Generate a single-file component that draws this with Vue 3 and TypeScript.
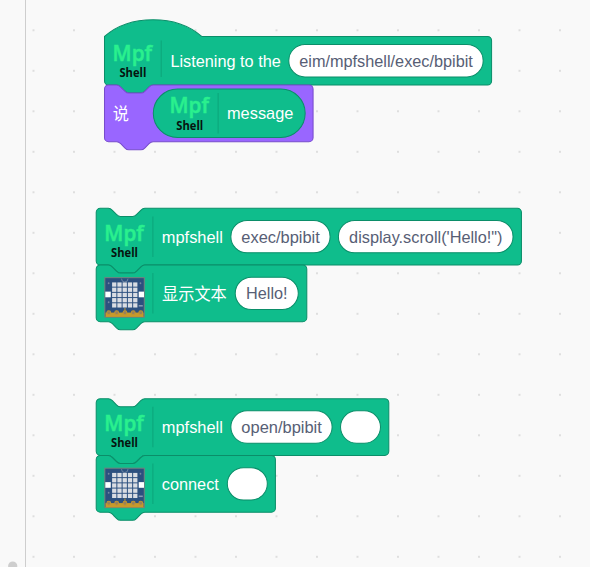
<script setup lang="ts">
type Kind = 'hat' | 'stack' | 'reporter'
type Icon = 'mpf' | 'board'

interface Label { text: string; x: number; y: number; width: number }
interface Input { text: string; x: number; y: number; width: number; textWidth: number }
interface Block {
  id: string
  kind: Kind
  tone: 'green' | 'purple'
  x: number
  y: number
  width: number
  height: number
  icon?: { name: Icon; x: number; y: number }
  divider?: { x: number; y1: number; y2: number }
  labels: Label[]
  inputs: Input[]
}

const scale = 1.0125

const blocks: Block[] = [
  {
    id: 'listen', kind: 'hat', tone: 'green', x: 104.5, y: 36.4, width: 382.3, height: 48,
    icon: { name: 'mpf', x: 8, y: 4 }, divider: { x: 56, y1: 4, y2: 40 },
    labels: [{ text: 'Listening to the', x: 65.1, y: 30.2, width: 109 }],
    inputs: [{ text: 'eim/mpfshell/exec/bpibit', x: 182, y: 8, width: 192, textWidth: 171.5 }],
  },
  {
    id: 'say', kind: 'stack', tone: 'purple', x: 104.5, y: 85, width: 206, height: 56,
    labels: [{ text: '说', x: 8.2, y: 34.4, width: 16 }],
    inputs: [],
  },
  {
    id: 'message', kind: 'reporter', tone: 'green', x: 153.3, y: 89, width: 150, height: 48,
    icon: { name: 'mpf', x: 16, y: 4 }, divider: { x: 64, y1: 4, y2: 44 },
    labels: [{ text: 'message', x: 72.8, y: 29.7, width: 65.5 }],
    inputs: [],
  },
  {
    id: 'exec', kind: 'stack', tone: 'green', x: 96.2, y: 208.3, width: 420, height: 56,
    icon: { name: 'mpf', x: 8, y: 12 }, divider: { x: 56, y1: 8, y2: 48 },
    labels: [{ text: 'mpfshell', x: 64.8, y: 33.9, width: 60.3 }],
    inputs: [
      { text: 'exec/bpibit', x: 133, y: 12, width: 98, textWidth: 77.5 },
      { text: "display.scroll('Hello!\")", x: 239.2, y: 12, width: 172.5, textWidth: 151.5 },
    ],
  },
  {
    id: 'show', kind: 'stack', tone: 'green', x: 96.2, y: 265, width: 208, height: 56,
    icon: { name: 'board', x: 8, y: 12 }, divider: { x: 56, y1: 8, y2: 48 },
    labels: [{ text: '显示文本', x: 65, y: 34.9, width: 64 }],
    inputs: [{ text: 'Hello!', x: 137.3, y: 12, width: 62.3, textWidth: 41 }],
  },
  {
    id: 'open', kind: 'stack', tone: 'green', x: 96.2, y: 398.7, width: 289, height: 56,
    icon: { name: 'mpf', x: 8, y: 12 }, divider: { x: 56, y1: 8, y2: 48 },
    labels: [{ text: 'mpfshell', x: 64.8, y: 33.9, width: 60.3 }],
    inputs: [
      { text: 'open/bpibit', x: 133, y: 12, width: 100, textWidth: 79.5 },
      { text: '', x: 241.3, y: 12, width: 39.5, textWidth: 0 },
    ],
  },
  {
    id: 'connect', kind: 'stack', tone: 'green', x: 96.2, y: 455.5, width: 177, height: 56,
    icon: { name: 'board', x: 8, y: 12 }, divider: { x: 56, y1: 8, y2: 48 },
    labels: [{ text: 'connect', x: 64.8, y: 33.9, width: 56.3 }],
    inputs: [{ text: '', x: 129.5, y: 12, width: 39.5, textWidth: 0 }],
  },
]

const notch = 'c2 0 3 1 4 2l4 4c1 1 2 2 4 2h12c2 0 3 -1 4 -2l4 -4c1 -1 2 -2 4 -2'
const tab = 'c-2 0 -3 1 -4 2l-4 4c-1 1 -2 2 -4 2h-12c-2 0 -3 -1 -4 -2l-4 -4c-1 -1 -2 -2 -4 -2'

function outline(b: Block): string {
  if (b.kind === 'reporter') {
    const r = b.height / 2
    return `M${r} 0H${b.width - r}a${r} ${r} 0 0 1 0 ${b.height}H${r}a${r} ${r} 0 0 1 0 ${-b.height}z`
  }
  const top = b.kind === 'hat' ? 'M0 0c25 -22 71 -22 96 0' : `M0 4a4 4 0 0 1 4 -4h8${notch}`
  return `${top}H${b.width - 4}a4 4 0 0 1 4 4V${b.height - 4}a4 4 0 0 1 -4 4H48${tab}H4a4 4 0 0 1 -4 -4z`
}

const cells = [0, 1, 2, 3, 4]
const pins = [4.4, 12.2, 20.4, 28.6, 36]
</script>

<template>
  <main class="workspace">
    <svg class="canvas" width="590" height="567" viewBox="0 0 590 567">
      <defs>
        <pattern id="grid" x="32.5" y="29.3" width="40.5" height="40.5" patternUnits="userSpaceOnUse">
          <rect class="dot" width="2" height="2" />
        </pattern>
        <g id="icon-mpf">
          <text class="mpf" x="0" y="20" textLength="39" lengthAdjust="spacingAndGlyphs">Mpf</text>
          <text class="shell" x="6.7" y="36.2" textLength="26.6" lengthAdjust="spacingAndGlyphs">Shell</text>
        </g>
        <g id="icon-board">
          <rect class="pcb" x="0.5" y="0.5" width="39" height="39" />
          <path class="logo" d="M17 1.5q0 3.3 3.2 3.3t3.2-3.3" />
          <circle class="hole" cx="4.3" cy="6" r="0.9" />
          <circle class="hole" cx="35.7" cy="6" r="0.9" />
          <circle class="hole" cx="4.3" cy="24.8" r="0.9" />
          <path class="print" d="M34 28.3h4" />
          <g v-for="row in cells" :key="row">
            <rect v-for="col in cells" :key="col" class="led" :x="7.7 + col * 5.2" :y="5.2 + row * 5.15" width="4.2" height="4.2" />
          </g>
          <rect class="button" x="1" y="14.3" width="5.4" height="5.6" />
          <rect class="button" x="34" y="14.3" width="5.2" height="5.6" />
          <rect class="gold" x="1.2" y="35" width="37.6" height="4.3" />
          <circle v-for="p in pins" :key="p" class="pin" :cx="p" cy="35.2" r="1.9" />
          <path class="pad" d="M20.4 30.5v3" />
        </g>
      </defs>

      <rect class="grid" x="26" width="564" height="567" fill="url(#grid)" />
      <rect class="edge" x="25" width="1" height="567" />
      <circle class="scroll" cx="12.7" cy="566" r="4.6" />

      <g
        v-for="b in blocks"
        :key="b.id"
        :class="['block', b.tone]"
        :transform="`translate(${b.x} ${b.y}) scale(${scale})`"
      >
        <path class="shape" :d="outline(b)" />
        <line v-if="b.divider" class="divider" :x1="b.divider.x" :x2="b.divider.x" :y1="b.divider.y1" :y2="b.divider.y2" />
        <use v-if="b.icon" :href="`#icon-${b.icon.name}`" :x="b.icon.x" :y="b.icon.y" />
        <text v-for="l in b.labels" :key="l.text" class="label" :x="l.x" :y="l.y" :textLength="l.width" lengthAdjust="spacingAndGlyphs">{{ l.text }}</text>
        <g v-for="i in b.inputs" :key="i.x" :transform="`translate(${i.x} ${i.y})`">
          <rect class="field" :width="i.width" height="32" rx="16" />
          <text v-if="i.text" class="value" :x="(i.width - i.textWidth) / 2 + 0.1" y="21.9" :textLength="i.textWidth" lengthAdjust="spacingAndGlyphs">{{ i.text }}</text>
        </g>
      </g>
    </svg>
  </main>
</template>

<style>
body {
  background: #f9f9f9;
  overflow: hidden;
}
</style>

<style scoped>
.workspace {
  width: 590px;
  height: 567px;
  background: #f9f9f9;
}
.canvas {
  display: block;
  font-family: "Liberation Sans", "Noto Sans CJK SC", sans-serif;
  font-size: 16.3px;
}
.dot { fill: #dedede; }
.edge { fill: #cecece; }
.scroll { fill: #cecece; }
.shape { stroke-width: 1; }
.green .shape { fill: #0fbd8c; stroke: #0b8e69; }
.purple .shape { fill: #9966ff; stroke: #774dcb; }
.divider { stroke: #0da57a; stroke-width: 1; }
.label { fill: #fff; }
.value { fill: #575e75; }
.field { fill: #fff; stroke: #0b8e69; stroke-width: 1; }
.mpf {
  font: 600 21.3px "Open Sans", "Noto Sans", sans-serif;
  fill: #2af08e;
  stroke: #2af08e;
  stroke-width: 0.5;
}
.shell {
  font: 700 12.6px "Open Sans", "Noto Sans", sans-serif;
  fill: #06140f;
}
.pcb { fill: #2c507f; stroke: #74827f; stroke-width: 1; }
.logo { fill: none; stroke: #7a8faa; stroke-width: 0.8; }
.pad { fill: none; stroke: #c4942e; stroke-width: 1; }
.hole { fill: #7487a0; }
.print { stroke: #8a9bb4; stroke-width: 1.5; }
.led { fill: #d9dde3; }
.button { fill: #fff; }
.gold { fill: #c79a2b; }
.pin { fill: #98805a; stroke: #c4942e; stroke-width: 1; }
</style>
